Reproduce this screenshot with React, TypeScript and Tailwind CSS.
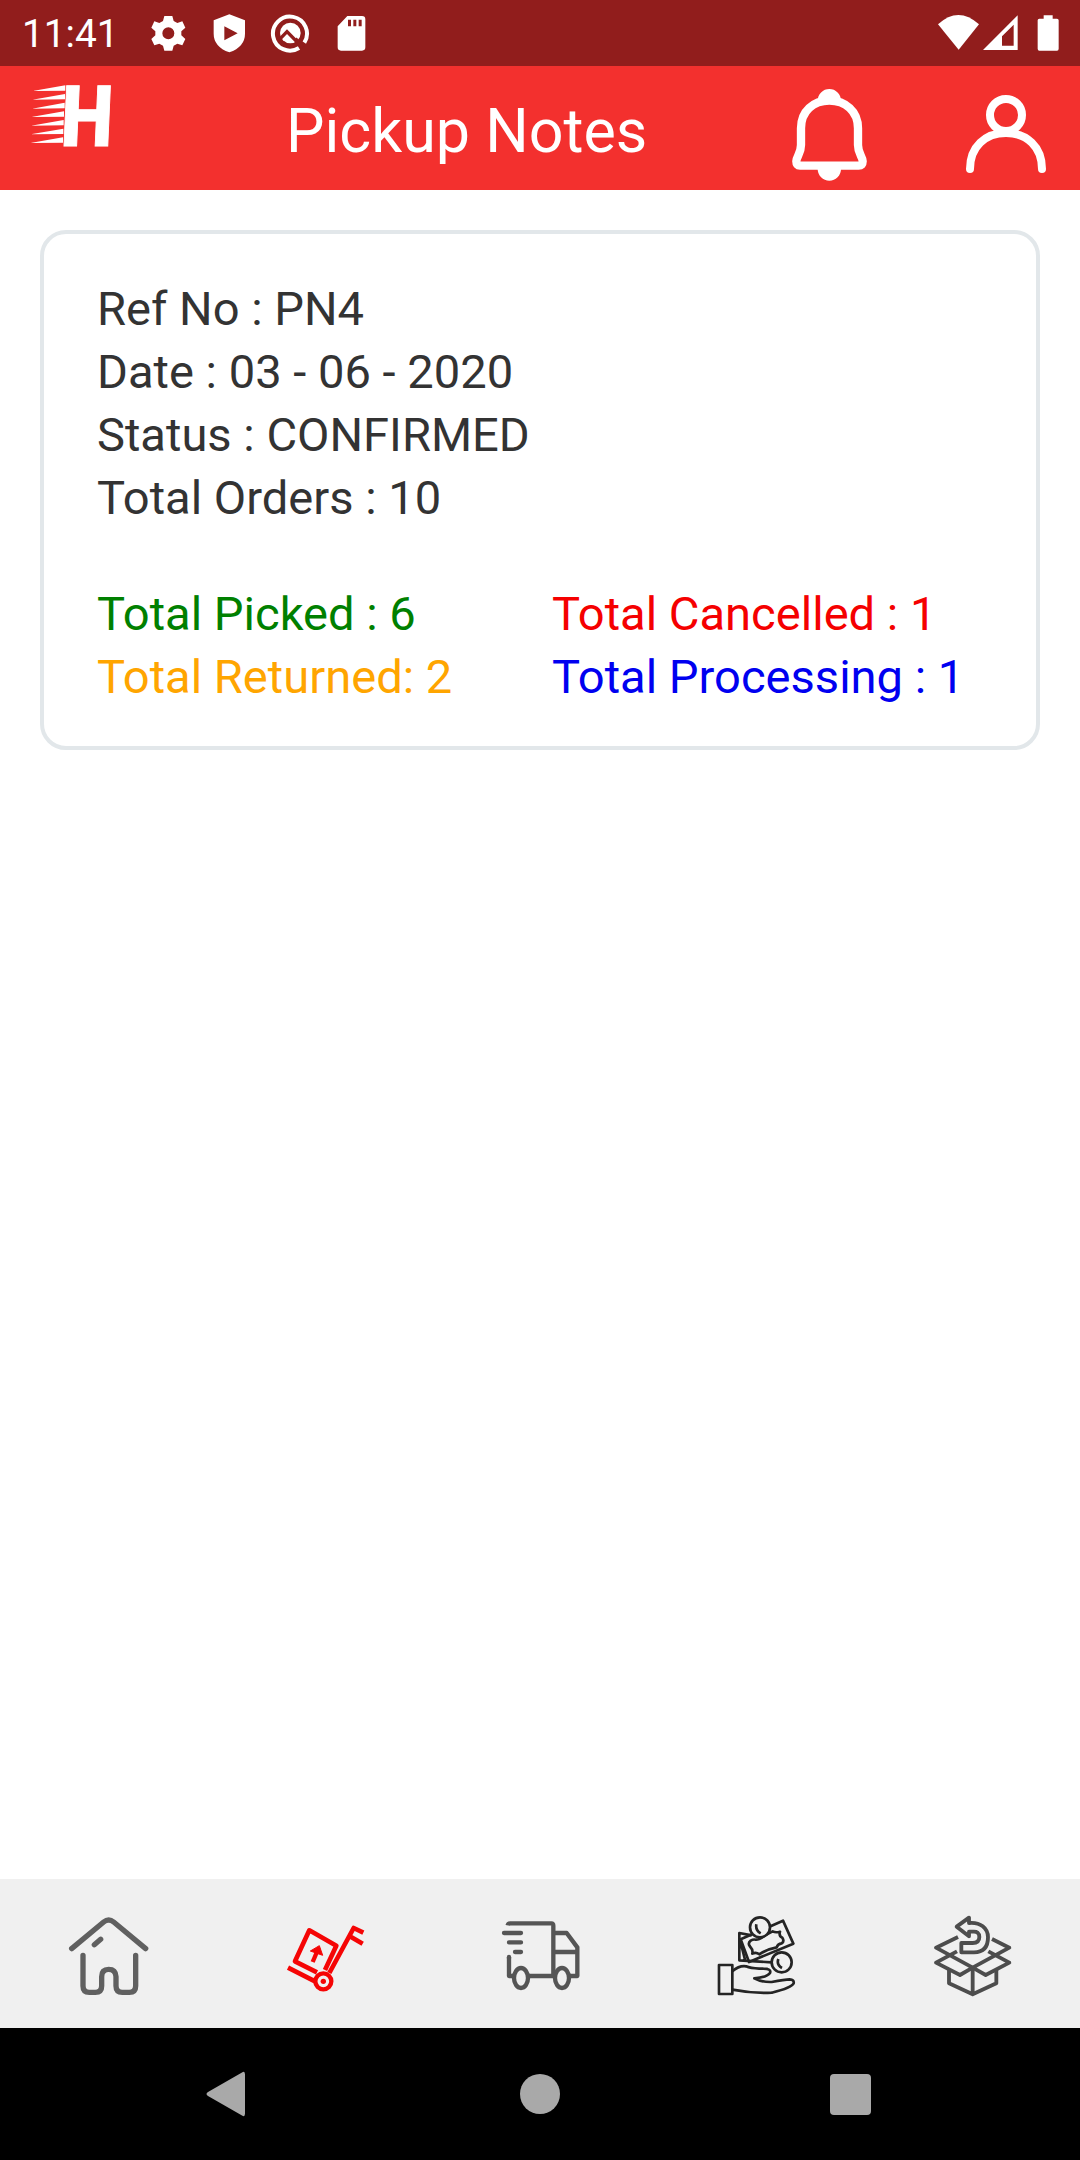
import React from 'react';

const details = ['Ref No : PN4', 'Date : 03 - 06 - 2020', 'Status : CONFIRMED', 'Total Orders : 10'];

const totals = [
  { label: 'Total Picked : 6', color: 'text-[#008000]' },
  { label: 'Total Cancelled : 1', color: 'text-[#f50000]' },
  { label: 'Total Returned: 2', color: 'text-[#ffa500]' },
  { label: 'Total Processing : 1', color: 'text-[#0000f0]' },
];

function StatusBar() {
  return (
    <div className="flex h-[66px] shrink-0 items-center bg-[#911d1c] text-white">
      <span className="w-[126px] pt-0.5 pl-[22px] text-[38.8px] leading-[66px]">11:41</span>
      <div className="flex gap-[21px] pl-[22px]">
        {/* Settings */}
        <svg className="size-10" viewBox="444 39 120 120" fill="currentColor">
          <path
            fillRule="evenodd"
            d="M493 48h24l4 15 11 6 15-5 9 19-12 11v12l12 11-9 19-15-5-11 6-4 15h-24l-4-15-11-6-15 5-9-19 12-11v-12l-12-11 9-19 15 5 11-6zM505 82a18 18 0 1 0 0 36 18 18 0 0 0 0-36z"
          />
        </svg>
        {/* Play Protect */}
        <svg className="size-10" viewBox="627 39 120 120" fill="currentColor">
          <path fillRule="evenodd" d="M688 43l47 18v40q0 39-47 56-47-17-47-56V61zM673 79v42l40-21z" />
        </svg>
        {/* Search in progress */}
        <svg className="size-10" viewBox="810 39 120 120" fill="none" stroke="currentColor">
          <path d="M897 144A51 51 0 1 1 913 128" strokeWidth="12" />
          <circle cx="871" cy="99" r="31" fill="currentColor" stroke="none" />
          <path d="M838 119l23-24 48 49" strokeWidth="10" className="stroke-[#911d1c]" />
          <path d="M886 116l22 24" strokeWidth="11" className="stroke-[#911d1c]" />
        </svg>
        {/* SD card */}
        <svg className="size-10" viewBox="993 39 120 120" fill="currentColor">
          <path
            fillRule="evenodd"
            d="M1042 48h44q10 0 10 10v84q0 10-10 10h-63q-10 0-10-10V79zM1044 59v20h9V59zM1060 59v20h9V59zM1076 59v20h9V59z"
          />
        </svg>
      </div>
      <div className="ml-auto flex gap-1 pr-[21px]">
        <svg className="h-10 w-[41px]" viewBox="534 39 123 120" fill="currentColor">
          <path d="M534 73q61-56 123 0l-61 76z" />
        </svg>
        <svg className="h-10 w-[35px]" viewBox="667 39 105 120" fill="currentColor">
          <path fillRule="evenodd" d="M667 150L771 46v104zM724 109v28h35V74z" />
        </svg>
        <svg className="ml-[15px] h-10 w-[22px]" viewBox="829 39 66 120" fill="currentColor">
          <path d="M849 46h27v10h13q5 0 5 5v85q0 6-5 6h-53q-5 0-5-6V61q0-5 5-5h13z" />
        </svg>
      </div>
    </div>
  );
}

function Header() {
  return (
    <header className="flex h-[124px] shrink-0 items-center bg-[#f3302e] text-white">
      {/* Logo */}
      <svg className="h-[124px] w-[130px]" viewBox="0 198 390 372" fill="currentColor">
        <path d="M98 273l98-17v16zM97 299l98-17v16zM96 326l98-18v17zM94 351l98-17v16zM93 377l98-17v16zM92 403l98-17v16zM91 429l98-17v16z" />
        <text
          transform="translate(180 437) skewX(-2.5) scale(.87 1)"
          fontFamily="Roboto"
          fontWeight="900"
          fontSize="254"
          stroke="currentColor"
          strokeWidth="3"
        >
          H
        </text>
      </svg>
      <h1 className="ml-[156px] pt-1.5 text-[61px] leading-[124px] whitespace-nowrap">Pickup Notes</h1>
      <svg className="ml-auto h-[124px] w-[120px]" viewBox="30 198 360 372" fill="none" stroke="currentColor" strokeWidth="25">
        <path
          strokeLinejoin="round"
          d="M123 385C123 333 160 302 208 302S294 333 294 385V435C294 462 308 470 308 484Q308 497 296 497H120Q109 497 109 484C109 470 123 462 123 435Z"
        />
        <path stroke="none" fill="currentColor" d="M173 302a35 35 0 0 1 70 0zM173 507a35 35 0 0 0 70 0z" />
      </svg>
      <svg className="mr-5 ml-[60px] h-[124px] w-[110px]" viewBox="570 198 330 372" fill="none" stroke="currentColor" strokeWidth="24">
        <circle cx="738" cy="345" r="48" />
        <path strokeLinecap="round" d="M630 507C630 440 676 399 738 399S846 440 846 507" />
      </svg>
    </header>
  );
}

function PickupCard() {
  return (
    <section className="mx-10 mt-10 h-[520px] rounded-[26px] border-4 border-[#e2e7ea] bg-white pt-[43px] pl-[53px] text-[47.1px] leading-[63px] text-[#333333]">
      {details.map(line => (
        <p key={line}>{line}</p>
      ))}
      <div className="mt-[53px] grid grid-cols-[455px_1fr] whitespace-nowrap">
        {totals.map(total => (
          <p key={total.label} className={total.color}>
            {total.label}
          </p>
        ))}
      </div>
    </section>
  );
}

function TabBar() {
  return (
    <nav className="grid h-[149px] shrink-0 grid-cols-5 justify-items-center bg-[#f0f0f0] pt-[21px]">
      {/* Home */}
      <svg className="size-[110px]" viewBox="39 60 330 330" fill="none" stroke="#606060" strokeWidth="16" strokeLinecap="round">
        <path d="M95 206L191 126Q206 114 221 126L317 206M163 194l19-16" />
        <path d="M129 226V318Q129 337 148 337H166Q185 337 185 318V290Q185 268 206 268T228 290V318Q228 337 247 337H268Q287 337 287 318V226" />
      </svg>
      {/* Pickup */}
      <svg className="size-[110px]" viewBox="-3 0 330 330" fill="none" stroke="#f50505" strokeWidth="14">
        <path strokeLinejoin="round" d="M141 217L75 184L118 91L199 137L165 210" />
        <path strokeLinejoin="round" d="M178 219L251 84L280 98M242 110L278 131M54 203L135 244" />
        <circle cx="160" cy="244" r="24" strokeWidth="13" />
        <circle cx="160" cy="244" r="8" fill="#f50505" stroke="none" />
        <path strokeWidth="13" d="M128 186L142 153" />
        <path fill="#f50505" strokeWidth="3" strokeLinejoin="round" d="M121 153L148 137L158 166Z" />
      </svg>
      {/* Delivery */}
      <svg className="size-[110px]" viewBox="0 0 330 330" fill="none" stroke="#555555" strokeWidth="13" strokeLinejoin="round">
        <path d="M68 76Q69 70 76 70H199Q205 70 205 77V228M72 171V228H86M132 228H211M205 99H245L277 142V228H255M205 156H277" />
        <path strokeLinecap="round" d="M57 99H108M72 127H108M90 156H108M72 171V175" />
        <ellipse cx="108" cy="234" rx="21" ry="30" />
        <ellipse cx="231" cy="234" rx="21" ry="30" />
      </svg>
      {/* Payments */}
      <svg className="size-[110px]" viewBox="3 0 330 330" fill="none" stroke="#242424" strokeWidth="8" strokeLinejoin="round">
        <path d="M57 195H97V282H57Z" />
        <path d="M97 214Q118 196 138 199C156 207 170 205 190 206Q215 206 210 219Q201 232 163 235Q185 247 215 246C240 241 255 238 269 238Q283 239 281 250C273 264 239 272 215 278Q157 281 97 269" />
        <path d="M155 106L118 99V181L215 187M120 120L135 179" />
        <path d="M122 118L249 62L280 131L147 186Z" />
        <path d="M152 122Q143 129 149 138Q160 150 157 161Q168 155 178 163Q201 147 230 142Q233 131 245 130Q254 124 247 113Q236 108 240 95Q227 99 218 94L195 106Q177 120 167 119Q160 117 152 122Z" />
        <circle cx="180" cy="82" r="30" fill="#f0f0f0" />
        <circle cx="245" cy="187" r="30" fill="#f0f0f0" />
        <path d="M169 73Q166 91 182 100M235 177Q229 195 246 204" />
      </svg>
      {/* Returns */}
      <svg className="size-[110px]" viewBox="-9 0 330 330" fill="none" stroke="#4d4d4d" strokeWidth="11.5" strokeLinejoin="round">
        <path d="M110 80L147 53V69C181 66 204 84 204 112Q204 157 162 157H124V129H158Q178 129 178 111T158 95H147V109Z" />
        <path d="M114 111L48 143L158 203L268 143L216 117M111 154L48 188L120 225L158 203L197 225L268 188L205 154" />
        <path d="M87 209V250L158 283L229 250V209M158 203V283" />
      </svg>
    </nav>
  );
}

function SystemNav() {
  return (
    <div className="flex h-[132px] shrink-0 items-center justify-between bg-black pr-[209px] pl-[206px] text-[#a9a9a9]">
      <svg className="h-[46px] w-10" viewBox="0 0 40 46" fill="currentColor">
        <path d="M36 1.5q3-2 3 2v39q0 4-3 2L2 25q-3-2 0-4z" />
      </svg>
      <div className="ml-[3px] size-10 rounded-full bg-[#a9a9a9]" />
      <div className="size-[41px] rounded-[4px] bg-[#a9a9a9]" />
    </div>
  );
}

export default function App() {
  return (
    <div className="flex h-[2160px] w-[1080px] flex-col bg-white font-['Roboto',sans-serif]">
      <StatusBar />
      <Header />
      <main className="flex-1">
        <PickupCard />
      </main>
      <TabBar />
      <SystemNav />
    </div>
  );
}
